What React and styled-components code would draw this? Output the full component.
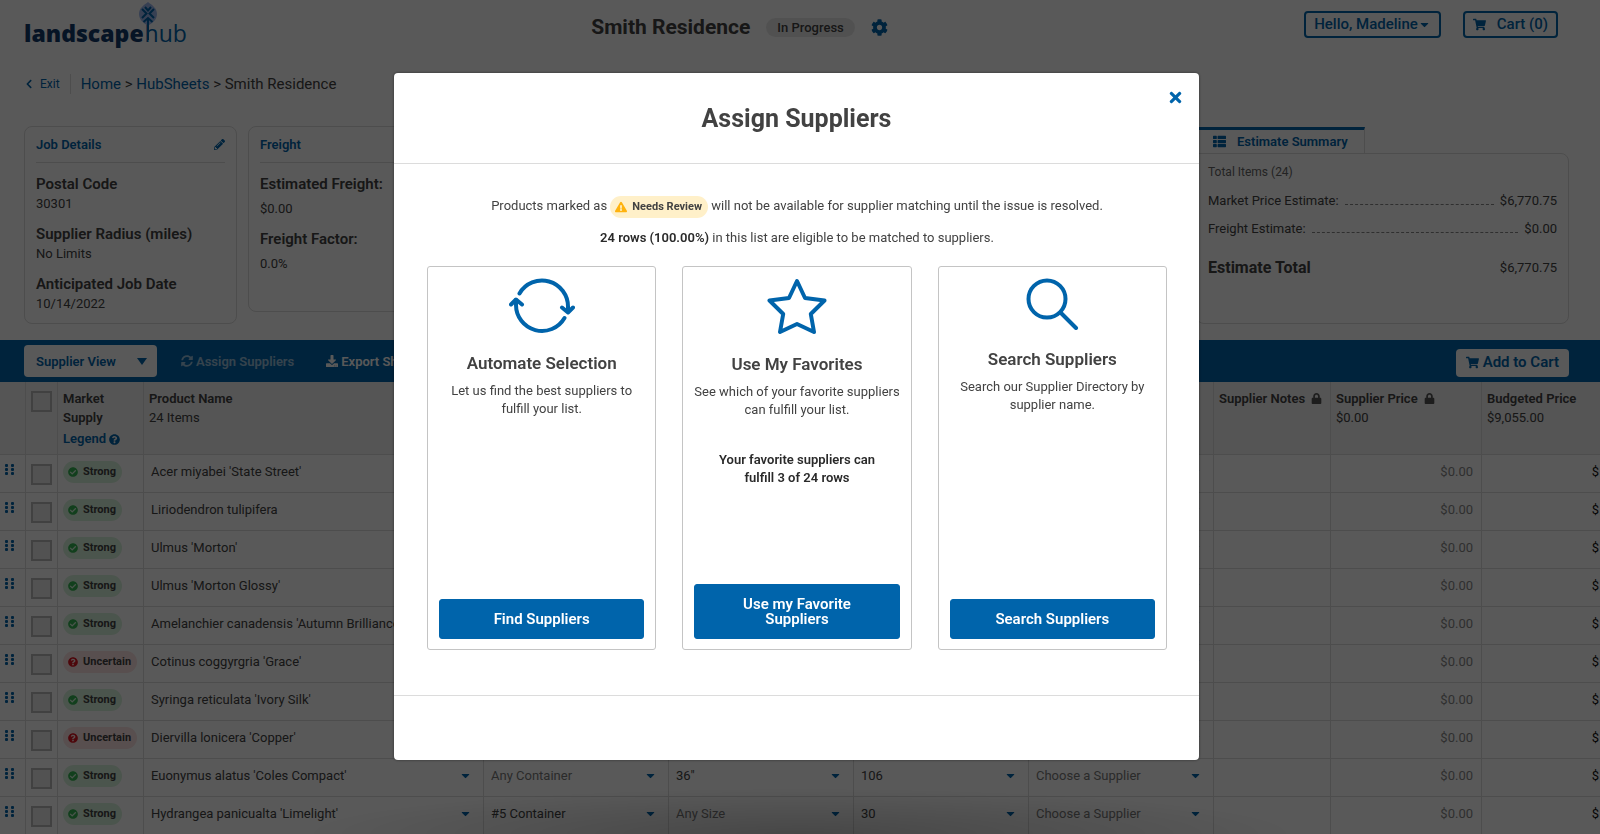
import React from "react";
import styled, { createGlobalStyle, css } from "styled-components";
import {
  FaCog, FaShoppingCart, FaCaretDown, FaChevronLeft, FaPencilAlt, FaThList,
  FaSyncAlt, FaDownload, FaQuestionCircle, FaCheckCircle, FaLock, FaTimes,
  FaExclamationTriangle,
} from "react-icons/fa";

const brand = "#0064ab";
const ink = "#424242";
const line = "#dcdcdc";

const GlobalStyle = createGlobalStyle`
  *, *::before, *::after { box-sizing: border-box; }
  body {
    margin: 0;
    overflow: hidden;
    background: #fff;
    color: ${ink};
    font: 400 13px/19px Roboto, "Liberation Sans", sans-serif;
  }
  button, select, input { font: inherit; color: inherit; margin: 0; }
  h1, h2, h3, p, dl, dd { margin: 0; }
  a { color: ${brand}; text-decoration: none; }
  svg { flex: none; }
`;

/* ---------- Top of the page ---------- */

const TopBar = styled.header`
  display: flex;
  align-items: flex-start;
  justify-content: space-between;
  height: 68px;
  padding: 11px 42px 0 24px;
`;

const LogoLink = styled.a`
  display: block;
  padding-top: 10px;
  font: 400 23px/24px "Open Sans", Lato, sans-serif;
  color: ${brand};
  strong { font-weight: 800; color: #123a6b; margin-right: 1px; }
`;

const LogoTail = styled.span`
  position: relative;
  display: inline-block;
`;

const Leaf = styled.svg`
  position: absolute;
  left: -6px;
  top: -19px;
`;

const Project = styled.div`
  display: flex;
  align-items: center;
  gap: 16px;
  height: 32px;
  padding-right: 12px;
`;

const ProjectName = styled.h1`
  font-size: 21px;
  line-height: 26px;
  font-weight: 700;
`;

const Status = styled.span`
  height: 19px;
  padding: 0 11px;
  border-radius: 10px;
  background: #e9e9e9;
  font-weight: 500;
`;

const IconButton = styled.button`
  display: flex;
  padding: 0;
  border: 0;
  background: none;
  color: ${brand};
  font-size: ${(p) => p.$size}px;
`;

const Actions = styled.div`
  display: flex;
  gap: 22px;
`;

const OutlineButton = styled.button`
  display: flex;
  align-items: center;
  gap: ${(p) => p.$gap}px;
  height: 27px;
  padding: 0 8px;
  border: 2px solid ${brand};
  border-radius: 4px;
  background: none;
  color: ${brand};
  font-size: 15px;
  font-weight: 500;
`;

const Crumbs = styled.nav`
  display: flex;
  align-items: center;
  height: 32px;
  padding: 0 24px;
  font-size: 15px;
`;

const ExitLink = styled.a`
  display: flex;
  align-items: center;
  gap: 6px;
  height: 20px;
  margin-right: 10px;
  padding-right: 10px;
  border-right: 1px solid ${line};
  font-size: 12px;
`;

/* ---------- Summary panels ---------- */

const Panels = styled.section`
  display: flex;
  align-items: flex-start;
  gap: 11px;
  min-height: 240px;
  padding: 26px 31px 0 24px;
`;

const Panel = styled.section`
  width: 213px;
  height: ${(p) => p.$height}px;
  padding: 8px 11px;
  border: 1px solid ${line};
  border-radius: 8px;
`;

const PanelHead = styled.div`
  display: flex;
  align-items: center;
  justify-content: space-between;
  height: 28px;
  margin-bottom: 12px;
  padding-bottom: 9px;
  border-bottom: 1px solid ${line};
`;

const PanelTitle = styled.h2`
  font-size: 13px;
  line-height: 19px;
  font-weight: 600;
  color: ${brand};
`;

const Facts = styled.dl`
  dt { font-size: 15px; line-height: 19px; font-weight: 600; }
  dd { margin-top: ${(p) => p.$gap}px; margin-bottom: 12px; line-height: 19px; }
`;

const Estimate = styled.section`
  width: 373px;
  margin-left: auto;
`;

const EstimateTab = styled.h2`
  display: flex;
  align-items: center;
  gap: 11px;
  width: 169px;
  height: 26px;
  margin-top: 1px;
  padding-left: 17px;
  border-top: 3px solid ${brand};
  border-right: 1px solid ${line};
  font-size: 13px;
  font-weight: 600;
  color: ${brand};
`;

const EstimateBody = styled.div`
  height: 171px;
  padding: 9px 11px 0 11px;
  border: 1px solid ${line};
  border-radius: 0 8px 8px 8px;
`;

const TotalItems = styled.p`
  font-size: 12px;
  color: #666;
`;

const EstimateRow = styled.div`
  display: flex;
  align-items: center;
  gap: 6px;
  margin-top: ${(p) => (p.$total ? 20 : 9)}px;
`;

const Dashes = styled.span`
  flex: 1;
  height: 8px;
  border-bottom: 1px dashed #888;
`;

const EstimateTotal = styled.strong`
  flex: 1;
  font-size: 16px;
  font-weight: 700;
`;

/* ---------- Toolbar ---------- */

const Toolbar = styled.div`
  display: flex;
  align-items: center;
  height: 42px;
  padding: 0 31px 0 24px;
  background: ${brand};
  color: #fff;
`;

const ViewPicker = styled.label`
  display: flex;
  align-items: center;
  width: 133px;
  height: 32px;
  padding: 0 10px 0 12px;
  border-radius: 4px;
  background: #fff;
  color: ${brand};
  select {
    flex: 1;
    min-width: 0;
    padding: 0;
    border: 0;
    background: none;
    appearance: none;
    font-weight: 600;
  }
`;

const ToolButton = styled.button`
  display: flex;
  align-items: center;
  gap: 3px;
  margin-left: ${(p) => p.$left}px;
  padding: 0;
  border: 0;
  background: none;
  font-weight: 600;
  white-space: nowrap;
  opacity: ${(p) => (p.$muted ? 0.6 : 1)};
`;

const AddToCart = styled.button`
  display: flex;
  align-items: center;
  gap: 4px;
  height: 28px;
  margin: 3px 0 0 auto;
  padding: 0 10px;
  border: 0;
  border-radius: 4px;
  background: #fff;
  color: ${brand};
  font-size: 15px;
  font-weight: 600;
`;

/* ---------- Product table ---------- */

const Table = styled.table`
  width: 100%;
  min-width: 1600px;
  table-layout: fixed;
  border-collapse: separate;
  border-spacing: 0;
  th:last-child, td:last-child { border-right: 0; }
`;

const HeadCell = styled.th`
  height: 73px;
  padding: 7px 5px 0;
  border-right: 1px solid ${line};
  border-bottom: 1px solid ${line};
  background: #f2f2f2;
  text-align: left;
  vertical-align: top;
  font-weight: 600;
  white-space: nowrap;
  span { display: block; font-weight: 400; }
  svg { margin-left: 3px; color: #555; vertical-align: -1px; }
  a svg { margin-left: 0; color: ${brand}; vertical-align: -2px; }
`;

const Legend = styled.a`
  display: block;
  margin-top: 2px;
`;

const Cell = styled.td`
  height: 38px;
  padding: 0 5px 4px;
  border-right: 1px solid ${line};
  border-bottom: 1px solid ${line};
  vertical-align: middle;
  ${(p) => p.$money && css`
    padding-right: ${p.$edge ? 1 : 8}px;
    text-align: right;
    color: ${p.$edge ? "#111" : "#888"};
  `}
`;

const Box = styled.input.attrs({ type: "checkbox" })`
  display: block;
  appearance: none;
  width: 21px;
  height: 21px;
  margin-top: ${(p) => p.$top}px;
  border: 2px solid #bbb;
  border-radius: 0;
  background: #ececec;
`;

const Pill = styled.span`
  display: inline-flex;
  align-items: center;
  gap: 5px;
  height: 22px;
  padding: 0 6px 0 5px;
  border-radius: 11px;
  background: ${(p) => p.$bg};
  font-size: 11px;
  line-height: 22px;
  font-weight: 700;
  vertical-align: middle;
  svg { color: ${(p) => p.$fg}; font-size: 10px; }
`;

const Picker = styled.div`
  display: flex;
  align-items: center;
  height: 32px;
  padding: 0 6px 0 2px;
  svg { color: ${brand}; font-size: 13px; }
  select {
    flex: 1;
    min-width: 0;
    padding: 0;
    border: 0;
    background: none;
    appearance: none;
    color: ${(p) => (p.$empty ? "#7a7a7a" : ink)};
  }
`;

/* ---------- Dialog ---------- */

const Overlay = styled.div`
  position: fixed;
  inset: 0;
  display: flex;
  align-items: flex-start;
  justify-content: center;
  padding: 73px 7px 0 0;
  background:
    radial-gradient(ellipse 500px 46px at 50% 100%, rgba(0, 0, 0, 0.2), transparent),
    rgba(0, 0, 0, 0.65);
`;

const Dialog = styled.section`
  position: relative;
  width: 100%;
  max-width: 805px;
  border-radius: 4px;
  background: #fff;
  box-shadow: 0 0 3px rgba(0, 0, 0, 0.5);
`;

const CloseSlot = styled.div`
  position: absolute;
  top: 16px;
  right: 15px;
`;

const DialogTitle = styled.h2`
  height: 91px;
  padding-top: 31px;
  border-bottom: 1px solid ${line};
  text-align: center;
  font-size: 25px;
  line-height: 30px;
  font-weight: 700;
`;

const DialogBody = styled.div`
  padding: 31px 32px 45px 33px;
  border-bottom: 1px solid ${line};
  text-align: center;
`;

const DialogFoot = styled.div`
  height: 64px;
`;

const Note = styled.p`
  line-height: 22px;
  margin-bottom: 9px;
`;

const ReviewPill = styled(Pill)`
  svg { font-size: 12px; }
`;

const Choices = styled.div`
  display: grid;
  grid-template-columns: repeat(3, 1fr);
  gap: 26px;
  margin-top: 17px;
`;

const Choice = styled.article`
  display: flex;
  flex-direction: column;
  align-items: center;
  height: 384px;
  padding: 11px 11px 10px;
  border: 1px solid #c4c4c4;
  border-radius: 3px;
  h3 {
    margin-top: 19px;
    font-size: 17px;
    line-height: 20px;
    font-weight: 600;
  }
  p { margin-top: 9px; line-height: 18px; }
`;

const Match = styled.strong`
  width: 180px;
  margin-top: 32px;
  line-height: 18px;
  font-weight: 600;
  color: #2a2a2a;
`;

const Primary = styled.button`
  width: 100%;
  margin-top: auto;
  padding: 12px 40px 11px;
  border: 1px solid ${brand};
  border-radius: 3px;
  background: ${brand};
  color: #fff;
  font-size: 15px;
  line-height: 15px;
  font-weight: 600;
`;

const CycleArt = () => (
  <svg width="66" height="56" viewBox="0 0 66 56" fill="none" stroke={brand} strokeWidth="4" strokeLinecap="round" strokeLinejoin="round" aria-hidden="true">
    <path d="M10.500 15.500A26 26 0 0 1 59 29V33" />
    <path d="M53 29.500L59 34.500L64 29.500" />
    <path d="M55.500 40A26 26 0 0 1 7 27V22" />
    <path d="M2 26.500L7 21.500L13 26.500" />
  </svg>
);

const StarArt = () => (
  <svg width="60" height="57" viewBox="0 0 60 57" fill="none" stroke={brand} strokeWidth="4" strokeLinejoin="round" aria-hidden="true">
    <path d="M30 3L38 20L57.500 22.500L43.800 36L47 54L30 46L13 54L16.200 36L2.500 22.500L22 20Z" />
  </svg>
);

const SearchArt = () => (
  <svg width="53" height="52" viewBox="0 0 53 52" fill="none" stroke={brand} strokeWidth="4" strokeLinecap="round" aria-hidden="true">
    <circle cx="21" cy="21" r="18.500" />
    <path d="M35 35L50 50" />
  </svg>
);

const Grip = () => (
  <svg width="10" height="12" viewBox="0 0 10 12" fill={brand} aria-hidden="true">
    {[0, 6].map((x) => [0, 4, 8].map((y) => <rect key={`${x}-${y}`} x={x} y={y} width="3" height="3" rx="1" />))}
  </svg>
);

const rows = [
  ["Acer miyabei 'State Street'", true],
  ["Liriodendron tulipifera", true],
  ["Ulmus 'Morton'", true],
  ["Ulmus 'Morton Glossy'", true],
  ["Amelanchier canadensis 'Autumn Brilliance'", true],
  ["Cotinus coggyrgria 'Grace'", false],
  ["Syringa reticulata 'Ivory Silk'", true],
  ["Diervilla lonicera 'Copper'", false],
  ["Euonymus alatus 'Coles Compact'", true, "Any Container", "36\"", "106"],
  ["Hydrangea panicualta 'Limelight'", true, "#5 Container", "Any Size", "30"],
];

const widths = [26, 32, 86, 340, 185, 185, 175, 185, 117, 151];

const DropCell = ({ label, value }) => (
  <Cell>
    <Picker $empty={/^(Any|Choose)/.test(value)}>
      <select aria-label={label}><option>{value}</option></select>
      <FaCaretDown />
    </Picker>
  </Cell>
);

const Supply = ({ strong }) => (
  <Pill $bg={strong ? "#d8f2dc" : "#fde2e2"} $fg={strong ? "#36b653" : "#dc1420"}>
    {strong ? <FaCheckCircle /> : <FaQuestionCircle />}
    {strong ? "Strong" : "Uncertain"}
  </Pill>
);

export default function App() {
  return (
    <>
      <GlobalStyle />
      <TopBar>
        <LogoLink href="#home">
          <strong>landscape</strong>
          <LogoTail>
            hub
            <Leaf width="18" height="40" viewBox="0 0 18 40" fill="none" aria-hidden="true">
              <path d="M9 0C13 3 18 6 18 12C18 18 13 21 9 24C5 21 0 18 0 12C0 6 5 3 9 0Z" fill="#9db8ee" />
              <path d="M9 38V17M4.500 20L9 16L13.500 20M3 7L7.500 11.500L3 16M15 7L10.500 11.500L15 16M6 5L9 8.500L12 5" stroke={brand} strokeWidth="2" />
            </Leaf>
          </LogoTail>
        </LogoLink>
        <Project>
          <ProjectName>Smith Residence</ProjectName>
          <Status>In Progress</Status>
          <IconButton $size={17} aria-label="Settings"><FaCog /></IconButton>
        </Project>
        <Actions>
          <OutlineButton $gap={0}>Hello, Madeline <FaCaretDown size={13} /></OutlineButton>
          <OutlineButton $gap={11}><FaShoppingCart size={13} /> Cart (0)</OutlineButton>
        </Actions>
      </TopBar>
      <Crumbs aria-label="Breadcrumb">
        <ExitLink href="#exit"><FaChevronLeft size={10} />Exit</ExitLink>
        <span><a href="#home">Home</a> &gt; <a href="#hubsheets">HubSheets</a> &gt; Smith Residence</span>
      </Crumbs>

      <Panels>
        <Panel $height={198}>
          <PanelHead>
            <PanelTitle>Job Details</PanelTitle>
            <IconButton $size={11} aria-label="Edit job details"><FaPencilAlt /></IconButton>
          </PanelHead>
          <Facts $gap={0}>
            <dt>Postal Code</dt><dd>30301</dd>
            <dt>Supplier Radius (miles)</dt><dd>No Limits</dd>
            <dt>Anticipated Job Date</dt><dd>10/14/2022</dd>
          </Facts>
        </Panel>
        <Panel $height={186}>
          <PanelHead><PanelTitle>Freight</PanelTitle></PanelHead>
          <Facts $gap={5}>
            <dt>Estimated Freight:</dt><dd>$0.00</dd>
            <dt>Freight Factor:</dt><dd>0.0%</dd>
          </Facts>
        </Panel>
        <Estimate>
          <EstimateTab><FaThList size={13} />Estimate Summary</EstimateTab>
          <EstimateBody>
            <TotalItems>Total Items (24)</TotalItems>
            <EstimateRow>Market Price Estimate:<Dashes />$6,770.75</EstimateRow>
            <EstimateRow>Freight Estimate:<Dashes />$0.00</EstimateRow>
            <EstimateRow $total><EstimateTotal>Estimate Total</EstimateTotal>$6,770.75</EstimateRow>
          </EstimateBody>
        </Estimate>
      </Panels>

      <Toolbar>
        <ViewPicker>
          <select aria-label="View"><option>Supplier View</option></select>
          <svg width="10" height="7" viewBox="0 0 10 7" fill={brand} aria-hidden="true"><path d="M0 0H10L5 7Z" /></svg>
        </ViewPicker>
        <ToolButton $left={24} $muted><FaSyncAlt size={12} />Assign Suppliers</ToolButton>
        <ToolButton $left={32}><FaDownload size={12} />Export Sheet</ToolButton>
        <AddToCart><FaShoppingCart size={13} />Add to Cart</AddToCart>
      </Toolbar>

      <Table>
        <colgroup>
          {widths.map((w, i) => <col key={i} width={w} />)}
          <col />
        </colgroup>
        <thead>
          <tr>
            <HeadCell />
            <HeadCell><Box $top={2} aria-label="Select all" /></HeadCell>
            <HeadCell>Market<br />Supply<Legend href="#legend">Legend <FaQuestionCircle size={11} /></Legend></HeadCell>
            <HeadCell>Product Name<span>24 Items</span></HeadCell>
            <HeadCell aria-label="Container" />
            <HeadCell aria-label="Size" />
            <HeadCell aria-label="Quantity" />
            <HeadCell aria-label="Supplier" />
            <HeadCell>Supplier Notes <FaLock size={11} /></HeadCell>
            <HeadCell>Supplier Price <FaLock size={11} /><span>$0.00</span></HeadCell>
            <HeadCell>Budgeted Price<span>$9,055.00</span></HeadCell>
          </tr>
        </thead>
        <tbody>
          {rows.map(([name, strong, container = "Any Container", size = "Any Size", qty = "1"]) => (
            <tr key={name}>
              <Cell><Grip /></Cell>
              <Cell><Box $top={6} aria-label={`Select ${name}`} /></Cell>
              <Cell><Supply strong={strong} /></Cell>
              <DropCell label="Product" value={name} />
              <DropCell label="Container" value={container} />
              <DropCell label="Size" value={size} />
              <DropCell label="Quantity" value={qty} />
              <DropCell label="Supplier" value="Choose a Supplier" />
              <Cell />
              <Cell $money>$0.00</Cell>
              <Cell $money $edge>$</Cell>
            </tr>
          ))}
        </tbody>
      </Table>

      <Overlay>
        <Dialog role="dialog" aria-modal="true" aria-labelledby="assign-title">
          <DialogTitle id="assign-title">Assign Suppliers</DialogTitle>
          <CloseSlot><IconButton $size={17} aria-label="Close"><FaTimes /></IconButton></CloseSlot>
          <DialogBody>
            <Note>
              Products marked as{" "}
              <ReviewPill $bg="#fff0c9" $fg="#ffb30f"><FaExclamationTriangle />Needs Review</ReviewPill>
              {" "}will not be available for supplier matching until the issue is resolved.
            </Note>
            <Note><Match as="b">24 rows (100.00%)</Match> in this list are eligible to be matched to suppliers.</Note>
            <Choices>
              <Choice>
                <CycleArt />
                <h3>Automate Selection</h3>
                <p>Let us find the best suppliers to fulfill your list.</p>
                <Primary>Find Suppliers</Primary>
              </Choice>
              <Choice>
                <StarArt />
                <h3>Use My Favorites</h3>
                <p>See which of your favorite suppliers can fulfill your list.</p>
                <Match>Your favorite suppliers can fulfill 3 of 24 rows</Match>
                <Primary>Use my Favorite Suppliers</Primary>
              </Choice>
              <Choice>
                <SearchArt />
                <h3>Search Suppliers</h3>
                <p>Search our Supplier Directory by supplier name.</p>
                <Primary>Search Suppliers</Primary>
              </Choice>
            </Choices>
          </DialogBody>
          <DialogFoot />
        </Dialog>
      </Overlay>
    </>
  );
}
